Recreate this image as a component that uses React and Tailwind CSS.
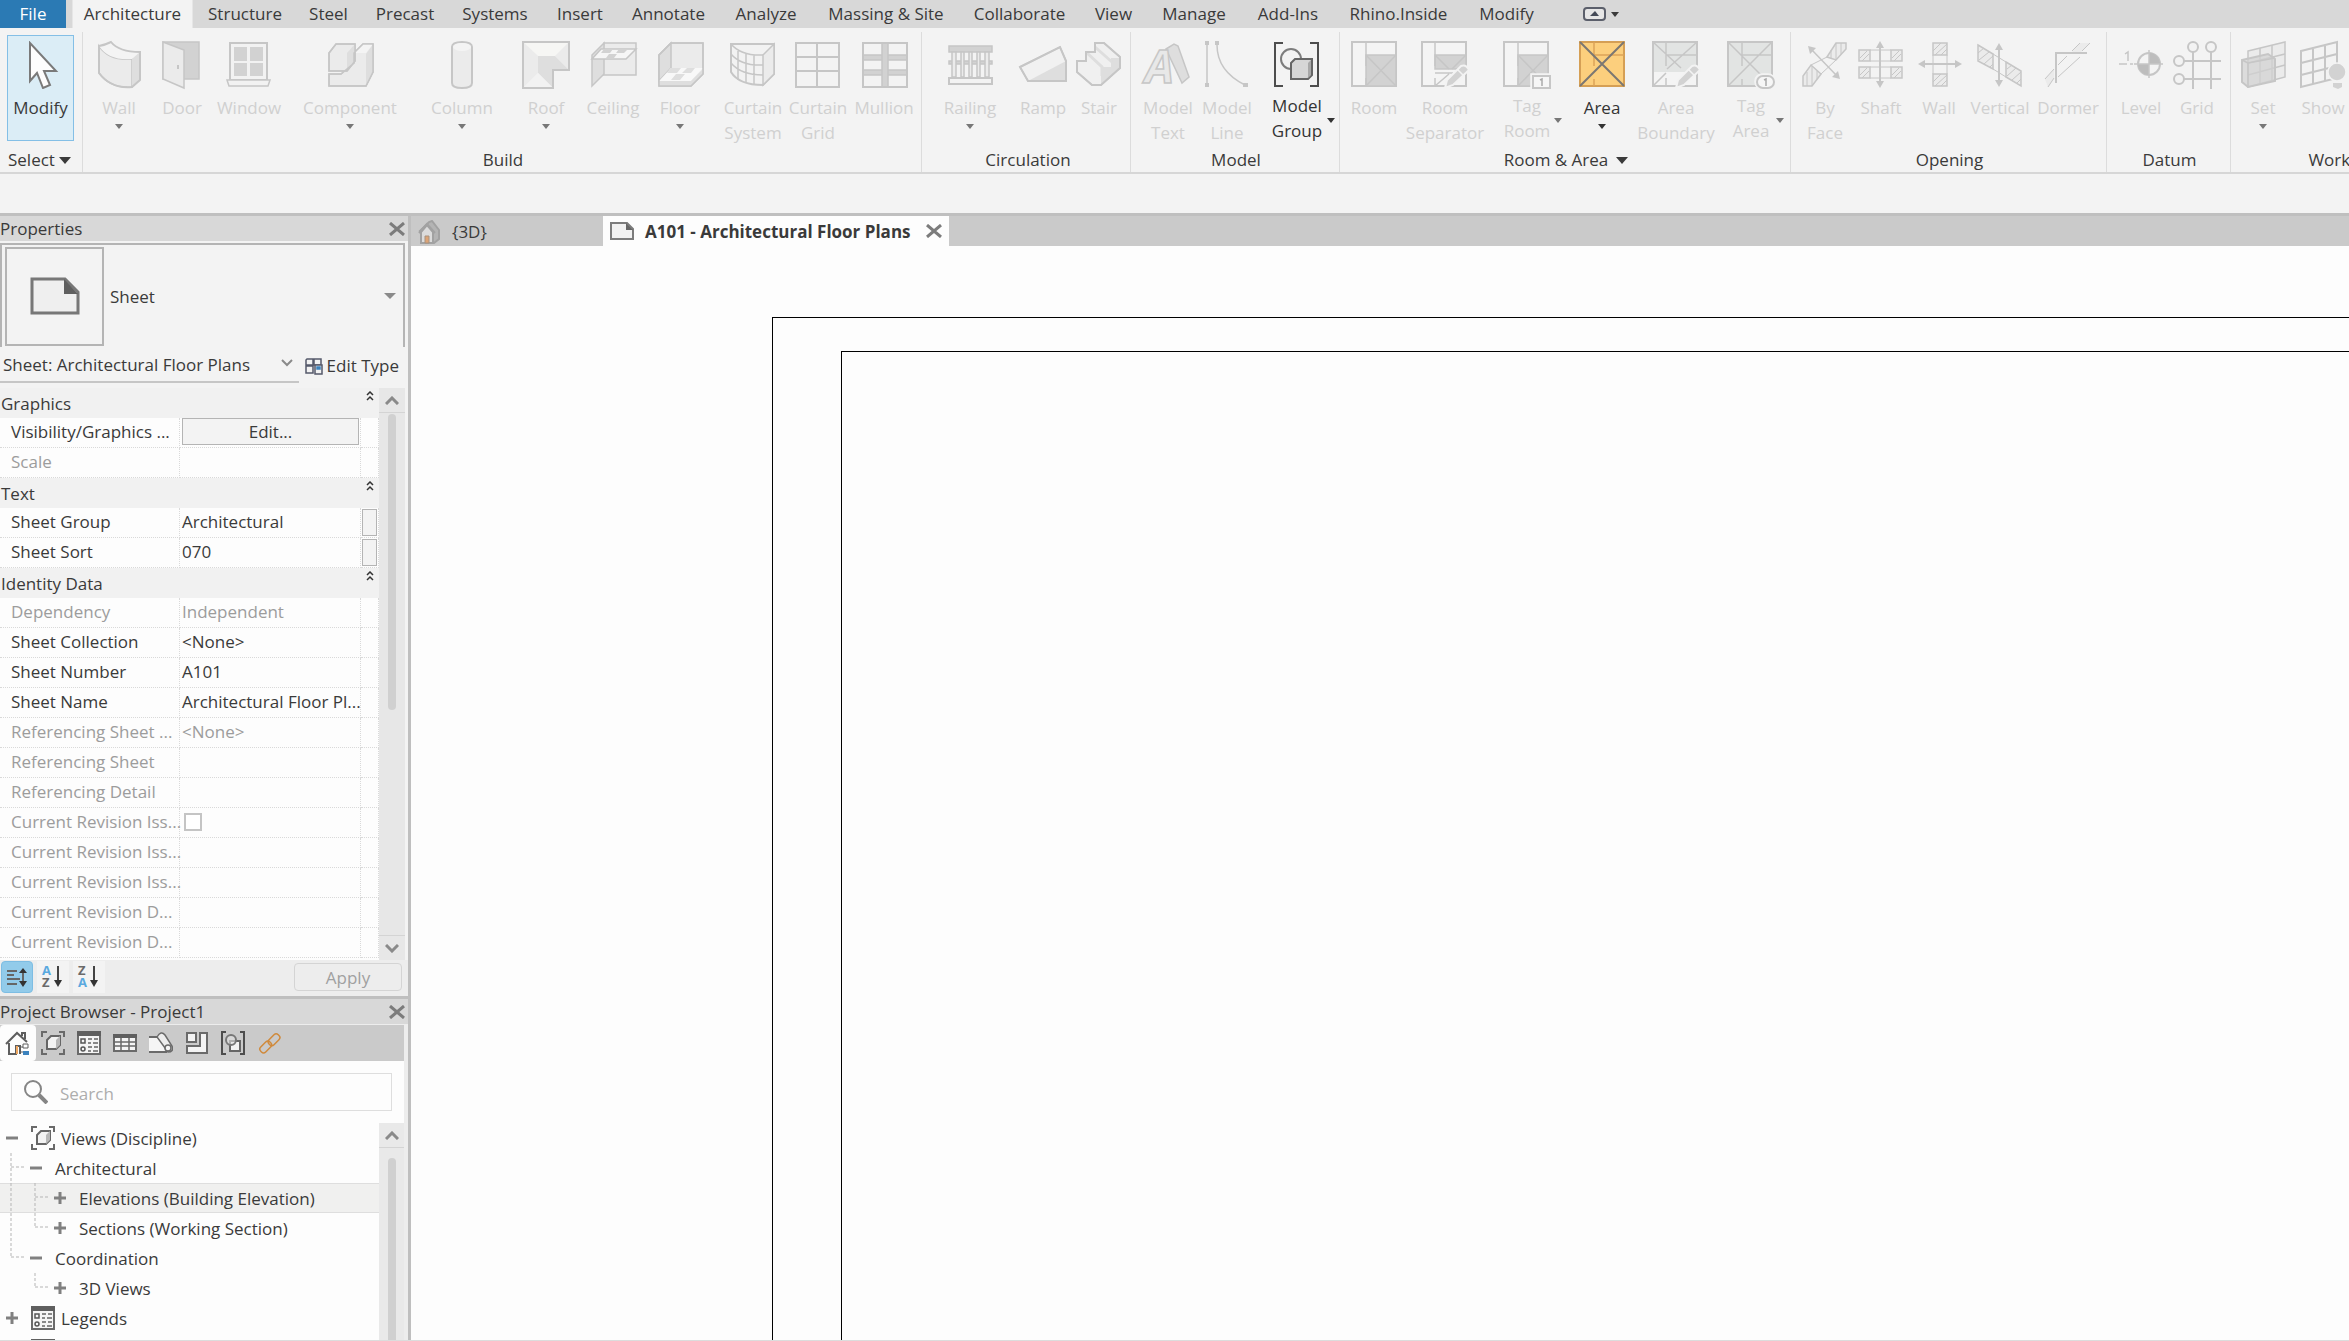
import React, { useState } from 'react';
import clsx from 'clsx';

const LINE = '#c6c6c6';
const LIGHT = '#ebebeb';
const MID = '#dedede';
const DARK = '#d2d2d2';

// Ribbon icons, all drawn on a 48x48 grid
const ribbonIcons = {
  modify: (
    <path d="M13 2v38l7-8 6 15 7-3-6-14h12z" fill="#fdfdfd" stroke="#7a7a7a" strokeWidth="2" />
  ),
  wall: (
    <>
      <path d="M4 5q10 15 33 13v28Q16 48 4 32z" fill={LIGHT} />
      <path d="M4 5q6-1 12-4 8 10 29 10l-8 7Q14 20 4 5z" fill="#f4f4f4" stroke="none" />
      <path d="M37 18l8-7v28l-8 7z" fill={MID} stroke="none" />
      <path d="M4 5q6-1 12-4 8 10 29 10v28l-8 7Q16 48 4 32z" fill="none" strokeWidth="2" />
    </>
  ),
  door: (
    <>
      <path d="M5 1h36v37H5z" fill={DARK} />
      <path d="M5 1l21 8v38L5 38z" fill={LIGHT} />
      <path d="M20 24v4" strokeWidth="2" />
    </>
  ),
  window: (
    <>
      <path d="M5 2h37v37H5z" fill="#f2f2f2" strokeWidth="2" />
      <path d="M9 6h13v14H9zM25 6h13v14H25zM9 22h13v13H9zM25 22h13v13H25z" fill={DARK} stroke="none" />
      <path d="M2 39h43l-2 6H4z" fill="#f2f2f2" />
    </>
  ),
  component: (
    <>
      <path d="M28 12l9-9h10v28l-7 14H3V33h12l13-11z" fill={LIGHT} />
      <path d="M40 13l7-10v28l-7 14z" fill={MID} stroke="none" />
      <path d="M28 12h12l7-9H37z" fill="#f4f4f4" stroke="none" />
      <path d="M3 12l7-9h19v17l-8 10H3z" fill={LIGHT} />
      <path d="M21 12l8-9v17l-8 10z" fill={MID} stroke="none" />
      <path d="M3 12l7-9h19v17l-8 10H3zM28 12l9-9h10v28l-7 14H3V33h12l13-11z" fill="none" />
    </>
  ),
  column: (
    <>
      <path d="M14 6v36q0 5 10 5t10-5V6q0-5-10-5T14 6z" fill={LIGHT} strokeWidth="2" />
      <ellipse cx="24" cy="6" rx="9" ry="4" fill="#f4f4f4" stroke="none" />
    </>
  ),
  roof: (
    <>
      <path d="M1 1h46L33 15H16z" fill="#f6f6f4" stroke="none" />
      <path d="M1 1l15 14v17L1 47z" fill={LIGHT} stroke="none" />
      <path d="M47 1v28L33 15z" fill={LIGHT} stroke="none" />
      <path d="M16 15h17l14 14H31v18L16 32z" fill={MID} stroke="none" />
      <path d="M1 47l15-15 15 15z" fill="#f2f2f2" stroke="none" />
      <path d="M1 1h46v28H31v18H1z" fill="none" strokeWidth="2" />
    </>
  ),
  ceiling: (
    <>
      <path d="M15 2h32v32H14V10z" fill={LIGHT} />
      <path d="M3 14L15 2v31L3 45z" fill={MID} />
      <path d="M3 18L12 8h35L37 18z" fill="#f6f6f6" />
      <path d="M15 8h9l-3 4h-9zM30 8h9l-4 4h-8zM20 13h8l-3 4h-8z" fill={DARK} stroke="none" />
    </>
  ),
  floor: (
    <>
      <path d="M15 2h32v31L35 45H3V14z" fill={LIGHT} />
      <path d="M3 14L15 2v25L3 40z" fill={MID} />
      <path d="M3 40l12-13h32L35 40z" fill="#f8f8f8" stroke="none" />
      <path d="M15 27h10l-4 5H11zM31 27h8l-4 5h-9zM20 33h9l-5 6h-9z" fill={MID} stroke="none" />
      <path d="M3 40h32l12-12v5L35 45H3z" fill={MID} stroke="none" />
      <path d="M15 2h32v31L35 45H3V14z" fill="none" />
    </>
  ),
  curtainSystem: (
    <>
      <path d="M2 3h43v30L34 44Q10 44 2 31z" fill="#f2f2f2" strokeWidth="2" />
      <path d="M34 14l11-11v30L34 44z" fill={LIGHT} />
      <path d="M2 3q10 12 32 11M2 13q10 12 32 11M2 22q10 12 32 12M9 10v29M17 13v29M25 14v29" fill="none" />
    </>
  ),
  curtainGrid: <path d="M2 2h43v44H2zM23 2v44M2 16h43M2 30h43" fill="none" strokeWidth="2" />,
  mullion: (
    <>
      <path d="M3 14h44v5H3zM3 29h44v5H3z" fill={DARK} />
      <path d="M22 2h6v44h-6z" fill={DARK} />
      <path d="M3 2h44v44H3z" fill="none" strokeWidth="2" />
    </>
  ),
  railing: (
    <>
      <path d="M3 5h43v6H3zM3 20h43v3H3z" fill={DARK} />
      <path d="M6 11h4v25H6zM15 11h3v25h-3zM23 11h3v25h-3zM31 11h3v25h-3zM39 11h4v25h-4z" fill={LIGHT} />
      <path d="M3 37h43v6H3z" fill="#f3f3f3" strokeWidth="2" />
    </>
  ),
  ramp: (
    <>
      <path d="M1 26L41 6l6 14v20H9z" fill="#f1f1f1" />
      <path d="M9 40l38-20v20z" fill={MID} stroke="none" />
      <path d="M1 26L41 6l6 14v20H9z" fill="none" strokeWidth="2" />
    </>
  ),
  stair: (
    <>
      <path d="M2 20h9v-9h9V2h9l16 14v11L26 44h-9L2 31z" fill="#f0f0f0" />
      <path d="M26 44v-9h2v-9h8v-9h9v10z" fill={MID} stroke="none" />
      <path d="M11 11l16 15v9M20 6l17 15" fill="none" stroke={MID} strokeWidth="3" />
      <path d="M2 20h9v-9h9V2h9l16 14v11L26 44h-9L2 31z" fill="none" strokeWidth="2" />
    </>
  ),
  modelText: (
    <>
      <path d="M22 8l8-5 4 2 11 31-7 6z" fill={MID} />
      <text x="1" y="42" fontSize="46" fontWeight="700" fontStyle="italic" fontFamily="Open Sans, sans-serif" fill="#e8e8e8">A</text>
    </>
  ),
  modelLine: (
    <>
      <path d="M4 4v38M14 4q0 26 28 40" fill="none" />
      <path d="M2 0h4v4H2zM12 0h4v4h-4zM2 42h4v4H2zM40 42h5v4h-5z" fill={LINE} stroke="none" />
    </>
  ),
  modelGroup: (
    <>
      <path d="M10 2H2v43h8M37 2h8v43h-8" fill="none" stroke="#4d4d4d" strokeWidth="2" />
      <circle cx="18" cy="18" r="10" fill="none" stroke="#7d7d7d" strokeWidth="2" />
      <path d="M18 22l4-4h17v16l-4 4H18z" fill="#d6d6d6" stroke="#666" strokeWidth="2" />
      <path d="M35 37V22l3-3v15z" fill="#a8a8a8" stroke="none" />
    </>
  ),
  room: (
    <>
      <path d="M2 1h44v44H2z" fill="#f4f4f4" strokeWidth="2" />
      <path d="M16 14h30v31H16z" fill={DARK} />
      <path d="M16 1v24M16 37v8M16 14l30 31M46 14L16 45" fill="none" />
    </>
  ),
  roomSeparator: (
    <>
      <path d="M1 1h44v44H1z" fill="#f4f4f4" strokeWidth="2" />
      <path d="M14 14h31v14H14z" fill={DARK} />
      <path d="M14 1v24M14 37v8M14 14l14 14M45 14L31 28M14 32h18M14 45l14-12" fill="none" />
      <path d="M24 47l2-8 14-14q5-2 8 4L32 44z" fill={DARK} stroke="#f3f3f3" strokeWidth="2" />
      <path d="M36 28l7 7" stroke="#f3f3f3" />
    </>
  ),
  tagRoom: (
    <>
      <path d="M1 1h44v44H1z" fill="#f4f4f4" strokeWidth="2" />
      <path d="M15 14h30v31H15z" fill={DARK} />
      <path d="M15 1v24M15 37v8M15 14l30 31M45 14L15 45" fill="none" />
      <path d="M28 33h20v15H28z" fill="#f3f3f3" stroke="#f3f3f3" />
      <path d="M30 35h17v12H30z" fill="#f6f6f6" strokeWidth="2" />
      <path d="M37 39l2-1v7" fill="none" stroke="#aaa" />
    </>
  ),
  area: (
    <>
      <path d="M2 1h44v44H2z" fill="#fccf7d" stroke="#d59f55" strokeWidth="2" />
      <path d="M16 1v24M16 38v7M16 14h30" fill="none" stroke="#dca458" />
      <path d="M2 1l44 44M46 1L2 45" fill="none" stroke="#7b7772" strokeWidth="2" />
    </>
  ),
  areaBoundary: (
    <>
      <path d="M1 1h44v44H1z" fill="#e2e4e3" strokeWidth="2" />
      <path d="M2 31h42v13H2z" fill="#f4f4f4" stroke="none" />
      <path d="M14 1v24M14 37v8M14 14h31M1 1l28 26M45 1L15 28M2 44l12-12" fill="none" />
      <path d="M24 47l2-8 14-14q5-2 8 4L32 44z" fill={DARK} stroke="#f3f3f3" strokeWidth="2" />
      <path d="M36 28l7 7" stroke="#f3f3f3" />
    </>
  ),
  tagArea: (
    <>
      <path d="M1 1h44v44H1z" fill="#e2e4e3" strokeWidth="2" />
      <path d="M15 1v24M15 38v7M15 14h30M1 1l44 44M45 1L1 45" fill="none" />
      <rect x="28" y="33" width="20" height="15" rx="7" fill="#f3f3f3" stroke="#f3f3f3" />
      <rect x="30" y="35" width="17" height="12" rx="6" fill="#f6f6f6" strokeWidth="2" />
      <path d="M37 39l2-1v7" fill="none" stroke="#aaa" />
    </>
  ),
  byFace: (
    <>
      <path d="M26 16l9-14h10v6l-10 11zM2 45V35l8-11 10 9-9 12z" fill={LIGHT} />
      <path d="M30 9v8M35 2v17M40 2v11M6 31v14M11 25v20M16 30v8M10 24l16-8M20 33l15-14" fill="none" strokeWidth="1" />
      <path d="M10 8l26 27" />
      <path d="M7 5l8 2-6 6zM39 38l-8-2 6-6z" fill={LINE} stroke="none" />
    </>
  ),
  shaft: (
    <>
      <path d="M2 9h11v11H2zM34 9h11v11H34zM2 26h11v11H2zM34 26h11v11H34z" fill={LIGHT} />
      <path d="M3 17l7-7M5 20l7-7M35 17l7-7M37 20l7-7M3 34l7-7M5 37l7-7M35 34l7-7M37 37l7-7M13 9h21M13 20h21M13 26h21M13 37h21" strokeWidth="1" />
      <path d="M23 4v38" strokeWidth="2" />
      <path d="M23 0l4 7h-8zM23 47l4-7h-8z" fill={LINE} stroke="none" />
    </>
  ),
  wallOpening: (
    <>
      <path d="M18 2h14v12H18zM18 33h14v12H18z" fill={LIGHT} />
      <path d="M18 10l8-8M20 14L32 3M26 14l6-6M18 41l8-8M20 45l12-11M26 45l6-6M18 14v19M32 14v19" strokeWidth="1" />
      <path d="M7 23h36" strokeWidth="2" />
      <path d="M3 23l7-4v8zM47 23l-7-4v8z" fill={LINE} stroke="none" />
    </>
  ),
  vertical: (
    <>
      <path d="M2 4l15 9v15L2 20zM30 21l15 9v15l-15-9z" fill={LIGHT} />
      <path d="M2 12l6-5M3 19l10-8M8 23l9-8M14 26l3-3M31 28l5-4M31 35l9-8M36 39l9-8M41 42l4-4M17 13l13 8M17 28l13 8" strokeWidth="1" />
      <path d="M23 6v36" strokeWidth="2" />
      <path d="M23 2l4 7h-8zM23 46l4-7h-8z" fill={LINE} stroke="none" />
    </>
  ),
  dormer: (
    <>
      <path d="M28 11l8-9h10l-9 9zM1 38l9-10v10l-6 8z" fill={LIGHT} stroke="none" />
      <path d="M28 10l8-8M38 10l8-8M1 38l9-10M4 46l6-9M14 24l9-9M14 36l22-20" strokeWidth="1" />
      <path d="M12 42V12h31" fill="none" strokeWidth="2" />
    </>
  ),
  level: (
    <>
      <path d="M8 13l3-2v9M2 23h8M13 23h3" fill="none" />
      <circle cx="32" cy="23" r="11" fill="#f4f4f4" strokeWidth="2" />
      <path d="M32 23V12a11 11 0 0 1 11 11zM32 23v11a11 11 0 0 1-11-11z" fill="#bdbdbd" stroke="none" />
      <path d="M17 23h29M32 9v28" />
    </>
  ),
  grid: (
    <>
      <path d="M20 10v38M38 10v38M10 20h38M10 38h38" strokeWidth="2" />
      <g fill="none" strokeWidth="2">
        <circle cx="20" cy="6" r="5" />
        <circle cx="38" cy="6" r="5" />
        <circle cx="6" cy="20" r="5" />
        <circle cx="6" cy="38" r="5" />
      </g>
    </>
  ),
  set: (
    <>
      <path d="M9 10l37-9v35L9 46z" fill={LIGHT} />
      <path d="M21 7v35M33 4v35M9 22l37-9M9 34l37-10" />
      <path d="M3 19l26-6 7 5v22L9 46l-6-5z" fill={DARK} fillOpacity="0.7" strokeWidth="2" />
      <path d="M3 19l6 3v24M9 22l27-5" fill="none" />
    </>
  ),
  show: (
    <>
      <path d="M2 10l36-9v36L2 46zM14 7v36M26 4v36M2 22l36-9M2 34l36-9" fill="none" strokeWidth="2" />
      <circle cx="38" cy="31" r="9" fill={DARK} stroke="#f3f3f3" />
      <path d="M34 42h9v4l-4 2-5-2z" fill={DARK} stroke="none" />
    </>
  ),
};

// Button widths follow the command spacing of the full-size ribbon
const groups = [
  {
    title: 'Build', width: 'w-[839px] pl-1.5',
    items: [
      { label: ['Wall'], icon: 'wall', w: 'w-[60px]', arrow: true },
      { label: ['Door'], icon: 'door', w: 'w-[66px]' },
      { label: ['Window'], icon: 'window', w: 'w-[68px]' },
      { label: ['Component'], icon: 'component', w: 'w-[134px]', arrow: true },
      { label: ['Column'], icon: 'column', w: 'w-[90px]', arrow: true },
      { label: ['Roof'], icon: 'roof', w: 'w-[78px]', arrow: true },
      { label: ['Ceiling'], icon: 'ceiling', w: 'w-[56px]' },
      { label: ['Floor'], icon: 'floor', w: 'w-[78px]', arrow: true },
      { label: ['Curtain', 'System'], icon: 'curtainSystem', w: 'w-[68px]' },
      { label: ['Curtain', 'Grid'], icon: 'curtainGrid', w: 'w-[62px]' },
      { label: ['Mullion'], icon: 'mullion', w: 'w-[70px]' },
    ],
  },
  {
    title: 'Circulation', width: 'w-[209px] pl-2',
    items: [
      { label: ['Railing'], icon: 'railing', w: 'w-[80px]', arrow: true },
      { label: ['Ramp'], icon: 'ramp', w: 'w-[66px]' },
      { label: ['Stair'], icon: 'stair', w: 'w-[46px]' },
    ],
  },
  {
    title: 'Model', width: 'w-[209px] pl-1.5',
    items: [
      { label: ['Model', 'Text'], icon: 'modelText', w: 'w-[62px]' },
      { label: ['Model', 'Line'], icon: 'modelLine', w: 'w-[56px]' },
      { label: ['Model', 'Group'], icon: 'modelGroup', w: 'w-[84px]', arrow: true, enabled: true },
    ],
  },
  {
    title: 'Room & Area', width: 'w-[451px] pl-1.5', more: true,
    items: [
      { label: ['Room'], icon: 'room', w: 'w-[56px]' },
      { label: ['Room', 'Separator'], icon: 'roomSeparator', w: 'w-[86px]' },
      { label: ['Tag', 'Room'], icon: 'tagRoom', w: 'w-[78px]', arrow: true },
      { label: ['Area'], icon: 'area', w: 'w-[72px]', arrow: true, enabled: true },
      { label: ['Area', 'Boundary'], icon: 'areaBoundary', w: 'w-[76px]' },
      { label: ['Tag', 'Area'], icon: 'tagArea', w: 'w-[74px]', arrow: true },
    ],
  },
  {
    title: 'Opening', width: 'w-[316px] pl-1.5',
    items: [
      { label: ['By', 'Face'], icon: 'byFace', w: 'w-[56px]' },
      { label: ['Shaft'], icon: 'shaft', w: 'w-[56px]' },
      { label: ['Wall'], icon: 'wallOpening', w: 'w-[60px]' },
      { label: ['Vertical'], icon: 'vertical', w: 'w-[62px]' },
      { label: ['Dormer'], icon: 'dormer', w: 'w-[74px]' },
    ],
  },
  {
    title: 'Datum', width: 'w-[124px] pl-1.5',
    items: [
      { label: ['Level'], icon: 'level', w: 'w-[56px]' },
      { label: ['Grid'], icon: 'grid', w: 'w-[56px]' },
    ],
  },
  {
    title: 'Work Plane', width: 'w-[248px] pl-0.5',
    items: [
      { label: ['Set'], icon: 'set', w: 'w-[60px]', arrow: true },
      { label: ['Show'], icon: 'show', w: 'w-[60px]' },
    ],
  },
];

const ribbonTabs = [
  { label: 'Structure', w: 'w-[100px]' },
  { label: 'Steel', w: 'w-[67px]' },
  { label: 'Precast', w: 'w-[86px]' },
  { label: 'Systems', w: 'w-[94px]' },
  { label: 'Insert', w: 'w-[76px]' },
  { label: 'Annotate', w: 'w-[101px]' },
  { label: 'Analyze', w: 'w-[94px]' },
  { label: 'Massing & Site', w: 'w-[146px]' },
  { label: 'Collaborate', w: 'w-[121px]' },
  { label: 'View', w: 'w-[67px]' },
  { label: 'Manage', w: 'w-[94px]' },
  { label: 'Add-Ins', w: 'w-[94px]' },
  { label: 'Rhino.Inside', w: 'w-[127px]' },
  { label: 'Modify', w: 'w-[89px]' },
];

const properties = [
  { section: 'Graphics' },
  { name: 'Visibility/Graphics ...', edit: true },
  { name: 'Scale', off: true },
  { section: 'Text' },
  { name: 'Sheet Group', value: 'Architectural', side: true },
  { name: 'Sheet Sort', value: '070', side: true },
  { section: 'Identity Data' },
  { name: 'Dependency', value: 'Independent', off: true },
  { name: 'Sheet Collection', value: '<None>' },
  { name: 'Sheet Number', value: 'A101' },
  { name: 'Sheet Name', value: 'Architectural Floor Pl...' },
  { name: 'Referencing Sheet ...', value: '<None>', off: true },
  { name: 'Referencing Sheet', off: true },
  { name: 'Referencing Detail', off: true },
  { name: 'Current Revision Iss...', check: true, off: true },
  { name: 'Current Revision Iss...', off: true },
  { name: 'Current Revision Iss...', off: true },
  { name: 'Current Revision D...', off: true },
  { name: 'Current Revision D...', off: true },
];

const tree = [
  { label: 'Views (Discipline)', guides: [], open: true, icon: 'views' },
  { label: 'Architectural', guides: ['tee'], open: true },
  { label: 'Elevations (Building Elevation)', guides: ['pass', 'tee'], selected: true },
  { label: 'Sections (Working Section)', guides: ['pass', 'elbow'] },
  { label: 'Coordination', guides: ['elbow'], open: true },
  { label: '3D Views', guides: ['none', 'elbow'] },
  { label: 'Legends', guides: [], icon: 'legends' },
  { label: '', guides: [], icon: 'schedules' },
];

const browserIcons = {
  home: (
    <>
      <path d="M1 13L12 2l10 9M17 5V2h3v6M4 12v11h7v-8h4v8" fill="none" stroke="#5e5e5e" strokeWidth="2" />
      <path d="M11 15h2v8h-2z" fill="#f0a860" />
      <path d="M15 14v8M15 16h3M15 21h3" stroke="#5e5e5e" fill="none" />
      <path d="M18 13h5v4h-5z" fill="#fff" stroke="#5e5e5e" />
      <path d="M18 20h6v4h-6z" fill="#3c82bd" />
    </>
  ),
  views: (
    <>
      <path d="M1 6V1h5M18 1h5v5M23 18v5h-5M6 23H1v-5" fill="none" stroke="#6a6a6a" strokeWidth="2" />
      <path d="M6 9l4-4h9v9l-4 4H6z" fill="#f3f3f3" stroke="#666" strokeWidth="2" />
      <path d="M15 18V9l4-4v9z" fill="#b8b8b8" />
    </>
  ),
  legends: (
    <>
      <path d="M1 1h22v22H1z" fill="#f5f5f5" stroke="#6a6a6a" strokeWidth="2" />
      <path d="M0 0h24v5H0z" fill="#5f5f5f" />
      <path d="M4 8h4v4H4z" fill="none" stroke="#555" strokeWidth="1.5" />
      <circle cx="6" cy="18" r="2" fill="none" stroke="#555" strokeWidth="1.5" />
      <path d="M11 8h4M17 8h4M11 12h3M16 12h5M11 16h4M17 16h4M11 20h3M16 20h5" stroke="#666" strokeWidth="1.5" />
    </>
  ),
  schedules: (
    <>
      <path d="M1 4h22v16H1z" fill="#f5f5f5" stroke="#6a6a6a" strokeWidth="2" />
      <path d="M0 3h24v4H0z" fill="#5f5f5f" />
      <path d="M1 11h22M1 15h22M8 7v13M16 7v13" stroke="#6a6a6a" strokeWidth="1.5" />
    </>
  ),
  sheets: (
    <>
      <path d="M0 6h9l8 8v7H0z" fill="#f5f5f5" />
      <path d="M0 6h9M0 21h18" stroke="#6a6a6a" strokeWidth="2" />
      <path d="M8 6q4-7 8-2l7 11q2 6-4 6z" fill="#ededed" stroke="#6a6a6a" strokeWidth="1.5" />
      <circle cx="19" cy="17" r="3" fill="#f5f5f5" stroke="#6a6a6a" strokeWidth="1.5" />
    </>
  ),
  families: (
    <path d="M2 2h9v9H2zM15 2h7v20H2v-7h13z" fill="#f3f3f3" stroke="#6a6a6a" strokeWidth="2" />
  ),
  groups: (
    <>
      <path d="M5 1H1v22h4M19 1h4v22h-4" fill="none" stroke="#4d4d4d" strokeWidth="2" />
      <path d="M9 10h10v10H9z" fill="#f3f3f3" stroke="#666" strokeWidth="2" />
      <circle cx="10" cy="9" r="5" fill="#e2e2e2" fillOpacity="0.6" stroke="#777" strokeWidth="2" />
    </>
  ),
  links: (
    <g fill="none" stroke="#d08a3c" strokeWidth="1.5">
      <rect x="10" y="5" width="13" height="7" rx="3" transform="rotate(-45 17 8)" />
      <rect x="2" y="13" width="13" height="7" rx="3" transform="rotate(-45 8 16)" />
    </g>
  ),
};

const Caret = ({ className }) => (
  <svg viewBox="0 0 8 5" preserveAspectRatio="none" className={className} fill="currentColor" aria-hidden="true">
    <path d="M0 0h8L4 5z" />
  </svg>
);

const Chevron = ({ up }) => (
  <svg viewBox="0 0 14 9" className="h-[9px] w-3.5" fill="none" stroke="#8a8a8a" strokeWidth="3">
    <path d={up ? 'M1 8l6-6 6 6' : 'M1 1l6 6 6-6'} />
  </svg>
);

const CloseIcon = () => (
  <svg viewBox="0 0 16 14" className="h-3.5 w-4" stroke="#7c7c7c" strokeWidth="3">
    <path d="M1 1l14 12M15 1L1 13" />
  </svg>
);

const RibbonButton = ({ item }) => {
  // two-line commands with a menu carry the arrow beside their label
  const sideArrow = item.arrow && item.label.length > 1;
  return (
    <button
      type="button"
      disabled={!item.enabled}
      className={clsx(
        'relative flex shrink-0 flex-col items-center',
        item.w,
        item.enabled ? 'text-[#333]' : 'text-[#d0d0d0]'
      )}
    >
      <svg viewBox="0 0 48 48" className="h-12 w-12 overflow-visible" stroke={LINE} strokeWidth="1.5" aria-hidden="true">
        {ribbonIcons[item.icon]}
      </svg>
      <span className={clsx('flex flex-col items-center leading-[25px] whitespace-nowrap', sideArrow ? 'mt-1' : 'mt-1.5')}>
        {item.label.map((line) => (
          <span key={line}>{line}</span>
        ))}
      </span>
      {item.arrow && (
        <Caret
          className={clsx(
            'h-[5px] w-2',
            sideArrow ? 'absolute right-1 bottom-5' : 'mt-1',
            item.enabled ? 'text-[#333]' : 'text-[#777]'
          )}
        />
      )}
    </button>
  );
};

const Ribbon = () => (
  <header className="shrink-0 text-[#3a3a3a]">
    <nav className="flex h-7 items-stretch bg-[#d8d8d8]" aria-label="Ribbon tabs">
      <button type="button" className="w-[66px] bg-[#2b7ab4] text-white">File</button>
      <button type="button" className="ml-1.5 w-[121px] border-x border-[#e6e6e6] bg-[#f3f3f3]">Architecture</button>
      <div className="flex pl-0.5">
        {ribbonTabs.map((tab) => (
          <button key={tab.label} type="button" className={clsx('whitespace-nowrap', tab.w)}>{tab.label}</button>
        ))}
      </div>
      <button type="button" aria-label="Minimize ribbon" className="ml-8 flex items-center gap-1">
        <svg viewBox="0 0 24 14" className="h-3.5 w-6">
          <rect x="1" y="1" width="21" height="12" rx="3" fill="#e6e6e6" stroke="#5b5f6b" strokeWidth="2" />
          <path d="M7 9h9l-4-5z" fill="#444a57" />
        </svg>
        <Caret className="h-[5px] w-2" />
      </button>
    </nav>

    <div className="flex h-[146px] overflow-hidden border-b-2 border-[#d6d6d6] bg-[#f3f3f3] pt-1">
      <div className="flex w-[83px] shrink-0 flex-col border-r border-[#dcdcdc] px-[7px] pt-[3px]">
        <button type="button" className="flex h-[108px] w-[67px] flex-col items-center border border-[#84bfe6] bg-[#dbedf6] pt-[5px]">
          <svg viewBox="0 0 48 48" className="h-12 w-12">{ribbonIcons.modify}</svg>
          <span className="mt-1.5 leading-[25px]">Modify</span>
        </button>
        <button type="button" className="mt-[7px] flex items-center gap-1 pl-px leading-6">
          Select
          <Caret className="h-[7px] w-3" />
        </button>
      </div>
      {groups.map((group) => (
        <section key={group.title} className={clsx('flex shrink-0 flex-col border-r border-[#dcdcdc]', group.width)}>
          <div className="flex h-[118px] items-start pt-[9px]">
            {group.items.map((item, i) => (
              <RibbonButton key={i} item={item} />
            ))}
          </div>
          <h2 className="flex items-center justify-center gap-2 pr-1 leading-6 whitespace-nowrap">
            {group.title}
            {group.more && <Caret className="h-[7px] w-3" />}
          </h2>
        </section>
      ))}
    </div>
    <div className="h-[39px] bg-[#f3f3f3]" />
  </header>
);

const PanelTitle = ({ children }) => (
  <div className="flex h-[25px] shrink-0 items-center justify-between bg-[#d8d8d8] pr-[3px]">
    <h2>{children}</h2>
    <button type="button" aria-label="Close panel"><CloseIcon /></button>
  </div>
);

const PropertyRow = ({ row }) => {
  if (row.section) {
    return (
      <tr className="h-[30px] bg-[#f1f1f1]">
        <th colSpan={3} className="p-0 pt-0.5 font-normal">
          <div className="flex items-center justify-between pr-[5px] pl-px">
            {row.section}
            <button type="button" aria-label={`Collapse ${row.section}`} className="-mt-4">
              <svg viewBox="0 0 8 10" className="h-2.5 w-2" fill="none" stroke="#333" strokeWidth="1.5">
                <path d="M1 4l3-3 3 3M1 9l3-3 3 3" />
              </svg>
            </button>
          </div>
        </th>
      </tr>
    );
  }
  return (
    <tr className={clsx('h-[30px]', row.off && 'text-[#9c9c9c]')}>
      <th scope="row" className="border-r border-b border-dotted border-[#d9d9d9] p-0 pb-0.5 pl-[11px] font-normal whitespace-nowrap">{row.name}</th>
      <td className="border-r border-b border-dotted border-[#d9d9d9] p-0 pb-0.5 pl-0.5 whitespace-nowrap">
        {row.value}
        {row.edit && (
          <button type="button" className="block h-[27px] w-[177px] border border-[#b4b4b4] bg-[#f3f3f3] leading-6">Edit...</button>
        )}
        {row.check && (
          <input type="checkbox" disabled aria-label={row.name} className="ml-0.5 block size-[18px] appearance-none border-2 border-[#c4c4c4] bg-white" />
        )}
      </td>
      <td className="border-r border-b border-dotted border-[#d9d9d9] p-px">
        {row.side && <button type="button" aria-label={`Browse ${row.name}`} className="block h-[27px] w-[15px] border border-[#b4b4b4] bg-[#f3f3f3]" />}
      </td>
    </tr>
  );
};

const SortButton = ({ letters }) => (
  <button type="button" aria-label={`Sort ${letters.join(' to ')}`} className="flex h-8 w-8 items-center justify-center bg-[#f3f3f3] pr-0.5">
    <svg viewBox="0 0 20 24" className="h-6 w-5 overflow-visible" fontFamily="Open Sans, sans-serif" fontSize="13" fontWeight="700">
      <text x="0" y="10" fill={letters[0] === 'A' ? '#5aa9df' : '#6a6a6a'}>{letters[0]}</text>
      <text x="0" y="22" fill={letters[1] === 'A' ? '#5aa9df' : '#6a6a6a'}>{letters[1]}</text>
      <path d="M16 1v16" stroke="#444" strokeWidth="2" />
      <path d="M12 15h8l-4 7z" fill="#333" />
    </svg>
  </button>
);

const PropertiesPanel = () => (
  <section className="shrink-0">
    <PanelTitle>Properties</PanelTitle>
    <div className="pt-0.5 pr-[3px]">
      <div className="flex h-[104px] items-center border-x-2 border-t-2 border-[#b4b4b4] pl-[3px]">
        <div className="flex size-[99px] items-center justify-center border-2 border-[#b4b4b4]">
          <svg viewBox="0 0 50 38" className="h-[38px] w-[50px]">
            <path d="M2 2h33l13 13v21H2z" fill="#efefef" stroke="#777" strokeWidth="3" />
            <path d="M34 2v15h14z" fill="#5f5f5f" />
          </svg>
        </div>
        <span className="grow pt-0.5 pl-1.5">Sheet</span>
        <button type="button" aria-label="Change type" className="mr-[7px]">
          <Caret className="h-1.5 w-3 text-[#8a8a8a]" />
        </button>
      </div>
      <div className="flex h-[41px] items-start justify-between">
        <div className="relative w-[299px] border-b-2 border-[#c6c6c6]">
          <select aria-label="Instance filter" className="h-[34px] w-full appearance-none bg-transparent pt-0.5 pl-[3px]">
            <option>Sheet: Architectural Floor Plans</option>
          </select>
          <svg viewBox="0 0 12 8" className="pointer-events-none absolute top-3 right-1.5 h-2 w-3" fill="none" stroke="#8a8a8a" strokeWidth="2">
            <path d="M1 1l5 5 5-5" />
          </svg>
        </div>
        <button type="button" className="flex h-[38px] items-center gap-1 pr-1.5">
          <svg viewBox="0 0 18 18" className="h-[18px] w-[18px]" fill="#f3f3f3" stroke="#555a6b" strokeWidth="1.5">
            <path d="M2 2h6v6H1V3zM9 2h7v6H9zM1 9h7v7H1z" />
            <path d="M10 8h7v9h-7z" />
            <path d="M12 10h3v2h-3z" fill="#3c82bd" stroke="#3c82bd" />
          </svg>
          Edit Type
        </button>
      </div>
      <div className="flex bg-[#fdfdfd]">
        <table className="mb-0.5 w-[379px] table-fixed border-separate border-spacing-0 text-left leading-6">
          <colgroup>
            <col className="w-[180px]" />
            <col className="w-[181px]" />
            <col className="w-[18px]" />
          </colgroup>
          <tbody>
            {properties.map((row, i) => (
              <PropertyRow key={i} row={row} />
            ))}
          </tbody>
        </table>
        <div className="flex grow flex-col items-center bg-[#e7e7e7]">
          <button type="button" aria-label="Scroll up" className="flex h-[25px] w-full items-center justify-center border-b border-[#d4d4d4]"><Chevron up /></button>
          <div className="mt-px h-[296px] w-2 rounded bg-[#d0d0d0]" />
          <button type="button" aria-label="Scroll down" className="mt-auto flex h-[25px] w-full items-center justify-center border-t border-[#d4d4d4]"><Chevron /></button>
        </div>
      </div>
    </div>
    <div className="flex h-[39px] items-center gap-1 border-b-[3px] border-[#bfbfbf] bg-[#ededed] pr-1.5 pb-0.5 pl-px">
      <button type="button" aria-label="Default order" className="flex h-8 w-8 items-center justify-center rounded border border-[#7dbde3] bg-[#92cbea]">
        <svg viewBox="0 0 20 20" className="h-5 w-5" stroke="#666" strokeWidth="2">
          <path d="M0 4h10M0 8h7M0 12h13M0 17h10M16 4v12" />
          <path d="M12 6h8l-4-5zM12 14h8l-4 6z" fill="#333" stroke="none" />
        </svg>
      </button>
      <SortButton letters={['A', 'Z']} />
      <SortButton letters={['Z', 'A']} />
      <button type="button" disabled className="ml-auto h-7 w-[108px] rounded border border-[#d4d4d4] pt-px text-[#a0a0a0]">Apply</button>
    </div>
  </section>
);

const guidePaths = {
  pass: 'M11 0v30',
  tee: 'M11 0v30M11 14h13',
  elbow: 'M11 0v14M11 14h13',
  none: '',
};

const TreeRow = ({ node }) => (
  <li className={clsx('flex h-[30px] items-center border-y', node.selected ? 'border-[#dedede] bg-[#f0f0ef]' : 'border-transparent')}>
    {node.guides.map((guide, i) => (
      <svg key={i} viewBox="0 0 24 30" className="-my-px h-[30px] w-6 shrink-0" fill="none" stroke="#b5b5b5" strokeDasharray="3 2">
        <path d={guidePaths[guide]} />
      </svg>
    ))}
    <button type="button" aria-label={`Toggle ${node.label}`} className="flex w-6 shrink-0 justify-center">
      <svg viewBox="0 0 12 12" className="h-3 w-3" stroke="#808080" strokeWidth="3">
        <path d={node.open ? 'M0 6h12' : 'M0 6h12M6 0v12'} />
      </svg>
    </button>
    {node.icon && (
      <svg viewBox="0 0 24 24" className="ml-[7px] h-6 w-6 shrink-0">{browserIcons[node.icon]}</svg>
    )}
    <span className={clsx('pt-0.5 whitespace-nowrap', node.icon ? 'pl-1.5' : 'pl-[7px]')}>{node.label}</span>
  </li>
);

const ProjectBrowser = () => {
  const [query, setQuery] = useState('');
  return (
    <section className="flex min-h-0 grow flex-col">
      <PanelTitle>Project Browser - Project1</PanelTitle>
      <div className="flex min-h-0 grow flex-col border-t border-r-4 border-[#ededed] bg-[#fdfdfd]">
        <div className="flex h-9 shrink-0 items-stretch bg-[#cacaca]">
          {Object.keys(browserIcons).map((name, i) => (
            <button
              key={name}
              type="button"
              aria-label={name}
              className={clsx('flex w-9 items-center justify-center pr-0.5', i === 0 && 'rounded-sm bg-[#fdfdfd]')}
            >
              <svg viewBox="0 0 24 24" className="h-6 w-6">{browserIcons[name]}</svg>
            </button>
          ))}
        </div>
        <label className="mt-3 mr-3 ml-[11px] flex h-[38px] shrink-0 items-center border border-[#dedede] pl-3">
          <svg viewBox="0 0 24 24" className="h-6 w-6 shrink-0" fill="none" stroke="#858585">
            <circle cx="9" cy="9" r="8" strokeWidth="2" />
            <path d="M15 15l8 8" strokeWidth="4" />
          </svg>
          <input
            type="text"
            aria-label="Search"
            placeholder="Search"
            value={query}
            onChange={(e) => setQuery(e.target.value)}
            className="w-full bg-transparent px-3 pt-1 outline-none placeholder:text-[#adadad]"
          />
        </label>
        <div className="mt-3 flex min-h-0 grow overflow-hidden">
          <ul className="w-[379px] shrink-0">
            {tree.map((node, i) => (
              <TreeRow key={i} node={node} />
            ))}
          </ul>
          <div className="flex grow flex-col items-center bg-[#e9e9e9]">
            <button type="button" aria-label="Scroll up" className="flex h-[25px] w-full shrink-0 items-center justify-center border-b border-[#d4d4d4]"><Chevron up /></button>
            <div className="mt-2.5 w-2 grow rounded-t bg-[#d0d0d0]" />
          </div>
        </div>
      </div>
    </section>
  );
};

const Viewport = () => (
  <main className="flex min-w-0 grow flex-col">
    <div className="flex h-[30px] shrink-0 bg-[#cacaca]">
      <button type="button" className="flex w-48 items-center gap-3 pt-0.5 pl-[7px]">
        <svg viewBox="0 0 22 24" className="h-6 w-[22px]" stroke="#a2a2a2" strokeWidth="2">
          <path d="M2 11l9-9 3-1 7 9v9l-5 4z" fill="#b4b4b4" />
          <path d="M3 23V12l6-7 6 7v11z" fill="#dcdcdc" />
          <path d="M1 13l8-9 8 9" fill="none" />
          <path d="M7 16h4v7H7z" fill="#dda476" stroke="#a8927f" strokeWidth="1" />
        </svg>
        {'{3D}'}
      </button>
      <div className="flex w-[346px] items-center bg-[#fdfdfd] px-[7px]">
        <svg viewBox="0 0 24 20" className="h-5 w-6 shrink-0">
          <path d="M1 2h16l6 6v10H1z" fill="#f1f1f1" stroke="#7c7c7c" strokeWidth="2" />
          <path d="M16 2v7h7z" fill="#666" />
        </svg>
        <span className="pt-px pl-[11px] font-bold whitespace-nowrap">A101 - Architectural Floor Plans</span>
        <button type="button" aria-label="Close view" className="ml-auto"><CloseIcon /></button>
      </div>
    </div>
    {/* drawing sheet runs off the right and bottom edges */}
    <div className="flex grow bg-[#fdfdfd] pt-[71px] pl-[361px]">
      <div className="flex grow border-t border-l border-black pt-[33px] pl-[68px]">
        <div className="grow border-t border-l border-black" />
      </div>
    </div>
  </main>
);

const App = () => (
  <div className="flex h-screen flex-col overflow-hidden border-b border-[#dcdcdc] bg-[#f3f3f3] font-['Open_Sans',sans-serif] text-[17px] text-[#3a3a3a]">
    <Ribbon />
    <div className="flex min-h-0 grow border-t-[3px] border-[#bfbfbf]">
      <aside className="flex w-[411px] shrink-0 flex-col border-r-[3px] border-[#bfbfbf]">
        <PropertiesPanel />
        <ProjectBrowser />
      </aside>
      <Viewport />
    </div>
  </div>
);

export default App;
